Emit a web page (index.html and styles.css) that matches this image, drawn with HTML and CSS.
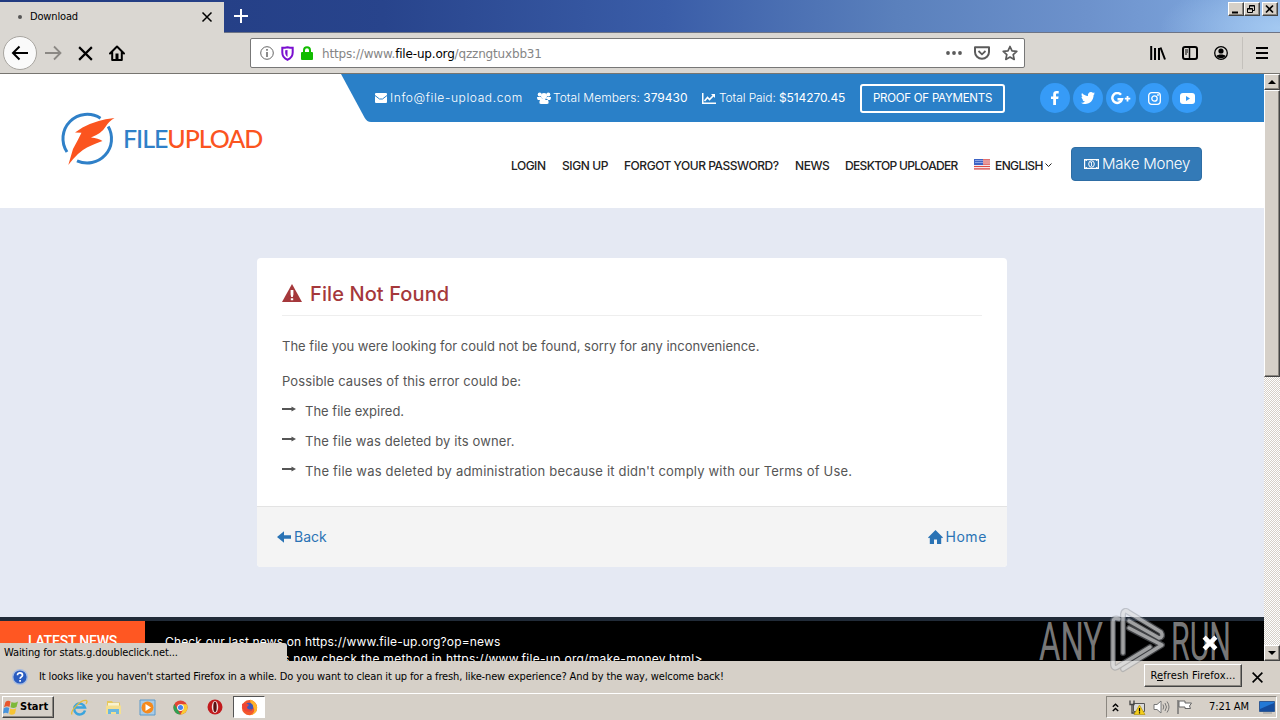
FILE: index.html
```html
<!DOCTYPE html>
<html lang="en">
<head>
<meta charset="utf-8">
<title>Download</title>
<link rel="stylesheet" href="styles.css">
</head>
<body>
<svg class="defs" width="0" height="0">
  <symbol id="x" viewBox="0 0 16 16"><path d="M2 2 14 14M14 2 2 14" fill="none" stroke="currentColor" stroke-width="2"/></symbol>
  <symbol id="arrow" viewBox="0 0 14 8"><path d="M0 4h11" stroke="#555" stroke-width="1.9"/><path d="M9.5 1.500 14 4 9.500 6.500z" fill="#555"/></symbol>
</svg>
<div class="screen">
  <header class="titlebar">
    <div class="tab"><i class="dot"></i><span class="tab-title">Download</span><svg class="tab-close" width="14" height="14"><use href="#x"/></svg></div>
    <svg class="newtab" width="14" height="14" viewBox="0 0 14 14"><path d="M7 0v14M0 7h14" stroke="#fff" stroke-width="2"/></svg>
    <div class="wincontrols">
      <button class="wbtn"><svg width="12" height="11" viewBox="0 0 12 11"><path d="M2 8.500h6" stroke="#000" stroke-width="2"/></svg></button>
      <button class="wbtn"><svg width="12" height="11" viewBox="0 0 12 11"><path d="M3.500 4V1.500h5v5H7M1.500 4.500h5v4h-5zM1.500 5h5M3.500 2h5" fill="none" stroke="#000"/></svg></button>
      <button class="wbtn wclose"><svg width="12" height="11" viewBox="0 0 12 11"><path d="M2 1.500 9 8.500M9 1.500 2 8.500" stroke="#000" stroke-width="1.700"/></svg></button>
    </div>
  </header>

  <div class="toolbar">
    <div class="back"><svg width="18" height="16" viewBox="0 0 18 16"><path d="M17 8H2M8.500 1.500 2 8l6.500 6.500" fill="none" stroke="#000" stroke-width="2"/></svg></div>
    <svg class="fwd" width="17" height="16" viewBox="0 0 17 16"><path d="M0 8h15M9 1.500 15.500 8 9 14.500" fill="none" stroke="#8b8884" stroke-width="1.800"/></svg>
    <svg class="stop" width="17" height="17"><use href="#x"/></svg>
    <svg class="home" width="16" height="16" viewBox="0 0 16 16"><path d="M1 8.500 8 1.500l7 7M3.200 7.500V15h9.600V7.500" fill="none" stroke="#000" stroke-width="2" stroke-linejoin="round" stroke-linecap="round"/><path d="M6.500 8.500h3V15h-3z"/></svg>
    <div class="urlbar">
      <svg width="14" height="14" viewBox="0 0 14 14"><circle cx="7" cy="7" r="6.300" fill="none" stroke="#666"/><path d="M7 3v1.700M7 6v5" stroke="#666" stroke-width="1.500"/></svg>
      <svg width="13" height="15" viewBox="0 0 13 15"><path d="M6.500 1.200c2 .5 3.500.6 5.200.6v4.700c0 3.500-2 6-5.200 7.300C3.300 12.500 1.300 10 1.300 6.500V1.800c1.700 0 3.200-.1 5.200-.6z" fill="none" stroke="#7a0fd0" stroke-width="2"/><path d="M6.500 4v7C4.900 9.700 4.200 8.200 4.200 6.500V4.300z" fill="#7a0fd0"/></svg>
      <svg width="12" height="14" viewBox="0 0 12 14"><path d="M3 7V4.200a3 3 0 0 1 6 0V7" fill="none" stroke="#12bc00" stroke-width="2"/><rect y="6" width="12" height="8" rx="1" fill="#12bc00"/></svg>
      <span class="url">https://www.<b>file-up.org</b>/qzzngtuxbb31</span>
      <span class="urltools">
        <svg width="16" height="4" viewBox="0 0 16 4"><g fill="#5b5b5b"><circle cx="2" cy="2" r="1.900"/><circle cx="8" cy="2" r="1.900"/><circle cx="14" cy="2" r="1.900"/></g></svg>
        <svg width="16" height="14" viewBox="0 0 16 14"><path d="M1 1.200h14V6a7 6.800 0 0 1-14 0z" fill="none" stroke="#5b5b5b" stroke-width="2" stroke-linejoin="round"/><path d="M4.500 5 8 8.300 11.500 5" fill="none" stroke="#5b5b5b" stroke-width="1.800"/></svg>
        <svg width="16" height="16" viewBox="0 0 16 16"><path d="m8 1.500 2 4.400 4.800.5-3.600 3.200 1 4.800L8 12l-4.200 2.400 1-4.800L1.200 6.400 6 5.900z" fill="none" stroke="#5b5b5b" stroke-width="1.700" stroke-linejoin="round"/></svg>
      </span>
    </div>
    <div class="tools">
      <svg width="16" height="14" viewBox="0 0 16 14"><path d="M1.200 0v14M5 2v12M9 2v12M10.500 1.500 15 13.500" stroke="#000" stroke-width="2"/></svg>
      <svg width="16" height="14" viewBox="0 0 16 14"><rect x="1" y="1" width="14" height="12" rx="2" fill="none" stroke="#000" stroke-width="2"/><path d="M7.500 1v12" stroke="#000" stroke-width="1.500"/><path d="M3 4h3M3 6h3M3 8h2" stroke="#000"/></svg>
      <svg width="14" height="14" viewBox="0 0 14 14"><circle cx="7" cy="7" r="6.300" fill="none" stroke="#000" stroke-width="1.300"/><circle cx="7" cy="5" r="2.600"/><path d="M2.500 10c1-2 8-2 9 0-2 3-7 3-9 0z"/></svg>
      <i class="sep"></i>
      <svg width="12" height="12" viewBox="0 0 12 12"><path d="M0 1h12M0 6h12M0 11h12" stroke="#000" stroke-width="2"/></svg>
    </div>
  </div>

  <div class="viewport">
    <main class="page">
      <div class="site-head">
        <div class="logo">
          <svg width="56" height="56" viewBox="0 0 56 56"><path d="M40.500 8.200A24.300 24.300 0 0 0 7 42M48.200 16.500A24.300 24.300 0 0 1 17 50.800" fill="none" stroke="#2f80c8" stroke-width="3"/><path d="M54.500 8Q36 10 22.500 17.500L15 22.500l6.500.3Q18 30 13 39L8.300 55Q18 42 27 37.500T42.500 31q-4-2.800-11.500-3.500Q42 23 45 17.500 49 11 54.500 8z" fill="#fb541f"/></svg>
          <span class="logo-text">FILE<em>UPLOAD</em></span>
        </div>
        <div class="head-right">
          <div class="topbar">
            <svg class="slant" width="30" height="48" viewBox="0 0 30 48"><path d="M0 0h30v48Q26 48 23.500 43.500z" fill="#2a80c8"/></svg>
            <div class="topbar-in">
              <span class="info mail"><svg width="12" height="10" viewBox="0 0 12 10"><rect width="12" height="10" rx="1" fill="#fff"/><path d="M0 2.500 4.500 6h3L12 2.500" fill="none" stroke="#2a80c8"/></svg><span>Info@file-upload.com</span></span>
              <span class="info members"><svg width="14" height="12" viewBox="0 0 14 12" fill="#fff"><circle cx="2.700" cy="2.500" r="2"/><circle cx="11.300" cy="2.500" r="2"/><circle cx="7" cy="4" r="3"/><path d="M0 5h4l2 3H1Q0 8 0 5zM14 5h-4L8 8h5q1 0 1-3zM2.500 9.500Q3 6 7 6.500 11 6 11.500 9.500 12 12 10 12H4Q2 12 2.500 9.500z"/></svg><span>Total Members: <b>379430</b></span></span>
              <span class="info paid"><svg width="14" height="11" viewBox="0 0 14 11"><path d="M.7 0v10.300H14M2.500 8l3-3.500 2 2L12 2" fill="none" stroke="#fff" stroke-width="1.600"/><path d="M9 1h4v4z" fill="#fff"/></svg><span>Total Paid: <b>$514270.45</b></span></span>
              <span class="proof">PROOF OF PAYMENTS</span>
              <div class="social">
                <i><svg width="8" height="14" viewBox="0 0 8 14"><path d="M2.200 14V8H0V5.400h2.200V3.300C2.200 1 3.500 0 5.400 0H7.700v2.500H6.300C5.200 2.500 5 3 5 3.700v1.700h2.600L7.200 8H5v6z" fill="#fff"/></svg></i>
                <i><svg width="14" height="12" viewBox="0 0 14 12"><path d="M14 1.500 12.600 3C12.700 8 9 12 4.300 12 2.500 12 1 11.500 0 10.700c1.500.1 3-.3 4-1.200-1.300 0-2.200-.8-2.600-2h1.200C1.200 7.100.5 6 .5 4.700l1.200.3C.5 4 .2 2.300 1 1c1.500 1.800 3.500 2.800 6 3C6.500 1.800 8 0 10 0c.8 0 1.500.3 2 .9L13.600.3 12.700 1.700z" fill="#fff"/></svg></i>
                <i><svg width="20" height="13" viewBox="0 0 20 13"><path d="M10 2.800A4.900 4.900 0 1 0 11 7.200H6.500" fill="none" stroke="#fff" stroke-width="2.500"/><path d="M16.500 4v5.500M13.800 6.700h5.500" stroke="#fff" stroke-width="1.800"/></svg></i>
                <i><svg width="13" height="13" viewBox="0 0 13 13"><rect x=".7" y=".7" width="11.600" height="11.600" rx="3" fill="none" stroke="#fff" stroke-width="1.300"/><circle cx="6.500" cy="6.500" r="2.700" fill="none" stroke="#fff" stroke-width="1.300"/><circle cx="10" cy="3" r=".9" fill="#fff"/></svg></i>
                <i><svg width="15" height="11" viewBox="0 0 15 11"><rect width="15" height="11" rx="3" fill="#fff"/><path d="m6 3 4 2.500L6 8z" fill="#369bf7"/></svg></i>
              </div>
            </div>
          </div>
          <nav class="nav">
            <span class="n1">LOGIN</span><span class="n2">SIGN UP</span><span class="n3">FORGOT YOUR PASSWORD?</span><span class="n4">NEWS</span><span class="n5">DESKTOP UPLOADER</span>
            <span class="lang"><svg width="16" height="11" viewBox="0 0 16 11"><path fill="#f3e9ea" d="M0 0h16v11H0z"/><path d="M0 .8h16M0 3h16M0 5.200h16M0 7.500h16M0 9.900h16" stroke="#dd4b48" stroke-width="1.200"/><path fill="#3e64c5" d="M0 0h9v6H0z"/><path d="M1.500 1.500h7M1.500 3.500h7" stroke="#d7e2ff" stroke-dasharray="1 1"/></svg><span class="n6">ENGLISH</span><svg width="7" height="5" viewBox="0 0 7 5"><path d="M.5.500 3.500 3.500 6.500.500" fill="none" stroke="#222"/></svg></span>
            <span class="money"><svg width="15" height="10" viewBox="0 0 15 10"><rect x=".6" y=".6" width="13.800" height="8.800" fill="none" stroke="#fff" stroke-width="1.200"/><ellipse cx="7.500" cy="5" rx="2.800" ry="3.200" fill="none" stroke="#fff"/><path d="M7.500 3v4M6.500 3.500h1M1.500 1.500h1.500M1.500 8.500H3M13.500 1.500H12M13.500 8.500H12" stroke="#fff" stroke-width=".9"/></svg><span>Make Money</span></span>
          </nav>
        </div>
      </div>

      <section class="card">
        <div class="card-body">
          <h1><svg width="20" height="18" viewBox="0 0 20 18"><path d="M10 0 20 18H0z" fill="#a5383b"/><path d="M8.600 6h2.800v4.500L10.800 13H9.200l-.6-2.500zM8.800 14.300h2.400v2H8.800z" fill="#fff"/></svg><span>File Not Found</span></h1>
          <p class="p1">The file you were looking for could not be found, sorry for any inconvenience.</p>
          <p class="p2">Possible causes of this error could be:</p>
          <ul>
            <li><svg width="14" height="8"><use href="#arrow"/></svg><span class="l1">The file expired.</span></li>
            <li><svg width="14" height="8"><use href="#arrow"/></svg><span class="l2">The file was deleted by its owner.</span></li>
            <li><svg width="14" height="8"><use href="#arrow"/></svg><span class="l3">The file was deleted by administration because it didn't comply with our Terms of Use.</span></li>
          </ul>
        </div>
        <div class="card-foot">
          <span class="link"><svg width="14" height="12" viewBox="0 0 14 12"><path d="M0 6 7 .3v4h7v3.400H7v4z" fill="#2a73b5"/></svg><span>Back</span></span>
          <span class="link home-link"><svg width="15" height="14" viewBox="0 0 15 14"><path d="M7.500 0 15 7.500l-1 .8-.8-.5V14H9V9.500H6V14H1.800V7.800l-.8.5-1-.8z" fill="#2a73b5"/></svg><span class="hm">Home</span></span>
        </div>
      </section>

      <section class="news">
        <div class="news-label">LATEST NEWS</div>
        <div class="news-text"><p class="t1">Check our last news on https://www.file-up.org?op=news</p><p class="t2">New payments news now check the method in https://www.file-up.org/make-money.html&gt;</p></div>
      </section>
    </main>
    <aside class="scroll">
      <div class="sbtn"><svg width="8" height="4" viewBox="0 0 8 4"><path d="M0 4 4 0l4 4z"/></svg></div>
      <div class="thumb"></div>
      <div class="sbtn bottom"><svg width="8" height="4" viewBox="0 0 8 4"><path d="M0 0 4 4l4-4z"/></svg></div>
    </aside>
    <div class="status">Waiting for stats.g.doubleclick.net...</div>
  </div>

  <div class="notice">
    <svg width="16" height="16" viewBox="0 0 16 16"><circle cx="8" cy="8" r="7.300" fill="#2a5cc0" stroke="#a9bde0" stroke-width="1.400"/><path d="M5.500 6.200c0-3.200 5-3 5 0 0 1.600-2.400 1.700-2.400 3.600M8.100 11v1.800" fill="none" stroke="#fff" stroke-width="1.700"/></svg>
    <span class="notice-text">It looks like you haven't started Firefox in a while. Do you want to clean it up for a fresh, like-new experience? And by the way, welcome back!</span>
    <button class="refresh"><span>R<u>e</u>fresh Firefox...</span></button>
    <svg class="nclose" width="13" height="13"><use href="#x"/></svg>
  </div>

  <footer class="taskbar">
    <button class="start"><svg width="16" height="15" viewBox="0 0 16 15"><path d="M2.500 2C4 .5 6 .5 7.500 1.500L6.500 7C5 6 3 6 1 7.200z" fill="#e9562c"/><path d="M8.500 2c2 1 4 1 6.500-.5l-1.500 5.500c-2 1.400-4 1.400-6 .3z" fill="#7db93a"/><path d="M.8 8.200C2.800 7 4.500 7 6.200 8l-1 5.500C3.500 12.500 2 12.500 0 13.500z" fill="#4793dc"/><path d="M7.200 8.400c2 1.200 4 1 6-.1L12 13.500c-2 1.500-4 1.500-5.800.5z" fill="#f6c434"/></svg><span>Start</span></button>
    <div class="apps">
      <svg width="17" height="17" viewBox="0 0 17 17"><path d="M14 11.500A5.500 5.500 0 1 1 14 8.500H4" fill="none" stroke="#3ba4dd" stroke-width="2.500"/><path d="M1 15.500C-1 12 10 0 15.500 1.500c1 .7.500 2-.5 3.500" fill="none" stroke="#e5bc3c" stroke-width="1.300"/></svg>
      <svg width="17" height="17" viewBox="0 0 17 17"><path d="M2 2h5l1 1.500h7V12H2z" fill="#e6c85e"/><path d="M3 4h11v3H3z" fill="#f9f3cf"/><path d="M1 6.500h15V15H1z" fill="#f4df91"/><path d="M3 15v-5h11v5h-3v-2H6v2z" fill="#6cb8df"/></svg>
      <svg width="17" height="17" viewBox="0 0 17 17"><path d="M1 1h15v15H1z" fill="#a9cbe6" stroke="#5d9bcb"/><circle cx="8.500" cy="8.500" r="6" fill="#f58a1d"/><path d="m6.500 5 5.500 3.500L6.500 12z" fill="#fff"/></svg>
      <svg width="15" height="15" viewBox="0 0 16 16"><circle cx="8" cy="8" r="7.500" fill="#e24435"/><path d="M1.500 4.200 8 15.500A7.500 7.500 0 0 1 1.500 4.200z" fill="#2fa052"/><path d="M8 15.500 12 8 8 4.500h6.600A7.500 7.500 0 0 1 8 15.500z" fill="#f9cd35"/><circle cx="8" cy="8" r="3.600" fill="#fff"/><circle cx="8" cy="8" r="2.700" fill="#4384ee"/></svg>
      <svg class="opera" width="16" height="16" viewBox="0 0 16 16"><circle cx="8" cy="8" r="7.500" fill="#c21a1d"/><ellipse cx="8" cy="8" rx="3.200" ry="6" fill="#f2dedd"/><ellipse cx="8" cy="8" rx="1.700" ry="5.200" fill="#5a1012"/></svg>
      <div class="active-app"><svg width="17" height="17" viewBox="0 0 17 17"><circle cx="8.500" cy="8.700" r="7.600" fill="#f4582c"/><path d="M9 .5c3 1 7 3.500 7.200 8A7.600 7.600 0 0 1 9 16.300c6-3 5-8 1-10z" fill="#ffb42a"/><circle cx="8" cy="8" r="4.200" fill="#4256b8"/><path d="M1 5c1-1 2.500-1 4-.5 1 .3 2 .5 3 1.500L6 8c0 2 2 3 5 2-1 3-6 3.500-8 1C1.500 9.500 1 7 1 5z" fill="#ee4434"/></svg></div>
    </div>
    <div class="tray">
      <svg class="chev" width="7" height="9" viewBox="0 0 7 9"><path d="m.8 3.800 2.700-2.500 2.700 2.500M.8 8l2.700-2.500L6.200 8" fill="none" stroke="#000" stroke-width="1.400"/></svg>
      <svg class="net" width="17" height="15" viewBox="0 0 17 15"><path d="M4.500 3.500h11v8h-11z" fill="#dadada" stroke="#555"/><path d="M1 .5v4h4v-4M3 4.500V13h3" fill="none" stroke="#444" stroke-width="1.300"/><path d="M10.500 5 16 14.500H5z" fill="#f5ce1b" stroke="#a98900" stroke-width=".6"/><path d="M10.500 8v3.500M10.500 12.300v1.300" stroke="#000" stroke-width="1.200"/></svg>
      <svg class="vol" width="17" height="14" viewBox="0 0 17 14"><path d="M1 4.500h3L8 1v12L4 9.500H1z" fill="#fff" stroke="#777"/><path d="M10 4.500q1.500 2.500 0 5M12 3q3 4 0 8M14 1.500q4 5.500 0 11" fill="none" stroke="#777"/></svg>
      <svg class="flag" width="16" height="14" viewBox="0 0 16 14"><path d="M1 0v14" stroke="#666" stroke-width="1.300"/><path d="M2 1h6v2h6.500l-2 3 1 2.500H8V7H2z" fill="#fff" stroke="#666"/></svg>
      <span class="clock">7:21 AM</span>
      <svg class="desk" width="17" height="13" viewBox="0 0 17 13"><path d="M.5.500h15v10H.5z" fill="#2379d6" stroke="#315a94"/><path d="m1 8 14-6v8H1z" fill="#154c9d"/><path d="M4 12h9" stroke="#999"/></svg>
    </div>
  </footer>

  <svg class="watermark" width="196" height="68" viewBox="0 0 196 68">
    <g fill="#fff" fill-opacity=".48">
      <text x="1" y="52" textLength="64" lengthAdjust="spacingAndGlyphs">ANY</text>
      <text x="133" y="52" textLength="60" lengthAdjust="spacingAndGlyphs">RUN</text>
    </g>
    <g fill="none" stroke-linejoin="round" stroke-linecap="round">
      <path id="wm" d="M81 11Q75 9 75 14V57Q76 62 81 58L112 39M85 45V6Q86 1 90 4L123 24Q126 29 121 30L91 13M91 20 124 37 85 61" stroke="#8f9299" stroke-opacity=".45" stroke-width="6"/>
      <path d="M81 11Q75 9 75 14V57Q76 62 81 58L112 39M85 45V6Q86 1 90 4L123 24Q126 29 121 30L91 13M91 20 124 37 85 61" stroke="#fff" stroke-opacity=".5" stroke-width="3.500"/>
    </g>
  </svg>
  <svg class="news-close" width="16" height="16" viewBox="0 0 15 15"><path d="M2 2 13 13M13 2 2 13" stroke="#fff" stroke-width="4.200"/></svg>
</div>
</body>
</html>
```
FILE: styles.css
```css
* { box-sizing: border-box; }
body { margin: 0; overflow: hidden; }
p, h1, ul { margin: 0; padding: 0; }
svg { display: block; flex: none; }
button { padding: 0; border: 0; border-radius: 0; font: inherit; color: #000; }
.defs { position: absolute; }
.screen { position: relative; width: 1280px; height: 720px; display: flex; flex-direction: column; overflow: hidden; font: 11px/14px "DejaVu Sans Condensed", "DejaVu Sans", sans-serif; font-stretch: condensed; color: #000; white-space: nowrap; }

.titlebar { height: 33px; display: flex; border-bottom: 1px solid #6d7486; background: radial-gradient(ellipse 120px 50px at 1280px 28px, #a4c9f1, transparent), linear-gradient(90deg, #213a80 0, #28448c 30%, #3a5da8 52%, #5a80bc 70%, #6d92cc 85%, #83ace2 100%); }
.tab { width: 224px; height: 33px; margin-top: 2px; padding: 0 11px 3px 18px; display: flex; align-items: center; background: #dad7d2; }
.dot { width: 4px; height: 4px; border-radius: 50%; background: #555; }
.tab-title { margin-left: 8px; letter-spacing: -.15px; }
.tab-close { margin-left: auto; width: 12px; height: 12px; }
.newtab { margin: 9px 0 0 10px; }
.wincontrols { margin: 2px 2px 0 auto; display: flex; }
.wbtn, .sbtn, .refresh, .start { background: #d6d0c8; border: 1px solid; border-color: #fff #444 #444 #fff; box-shadow: inset -1px -1px #8b8780; }
.wbtn { width: 16px; height: 14px; display: flex; justify-content: center; align-items: center; }
.wclose { margin-left: 2px; }

.toolbar { height: 41px; display: flex; align-items: center; background: #dad7d2; border-bottom: 1px solid #777570; }
.back { width: 34px; height: 34px; margin-left: 3px; border: 1px solid #a8a5a0; border-radius: 50%; background: #fafafa; display: flex; align-items: center; justify-content: center; flex: none; }
.fwd { margin-left: 8px; }
.stop { margin-left: 15px; }
.home { margin-left: 15px; }
.urlbar { width: 775px; height: 30px; margin-left: 125px; padding: 0 6px 0 9px; display: flex; align-items: center; gap: 7px; background: #fff; border: 1px solid #777; border-radius: 2px; flex: none; }
.url { margin: 2px 0 0 2px; font: 12px "DejaVu Sans", sans-serif; letter-spacing: -.17px; color: #858585; }
.url b { font-weight: 400; color: #000; }
.urltools { margin-left: auto; display: flex; align-items: center; gap: 12px; }
.tools { display: flex; align-items: center; margin-left: 125px; gap: 16px; }
.sep { width: 1px; height: 32px; background: #c4c1bc; margin: 0 -4px 0 -2px; }
.tools svg:last-child { margin-left: 1px; }

.viewport { position: relative; height: 587px; display: flex; overflow: hidden; }
.page { width: 1264px; height: 587px; background: #e5e9f3; font-family: Inter, "Open Sans", sans-serif; }
.site-head { height: 134px; background: #fff; display: flex; }
.logo { width: 341px; padding: 36px 0 0 60px; display: flex; flex: none; }
.logo-text { margin: 13px 0 0 7px; font: 500 25px/30px Lato, sans-serif; letter-spacing: -1.05px; color: #2f80c8; }
.logo-text em { font-style: normal; color: #fb541f; }
.head-right { width: 923px; }
.topbar { display: flex; height: 48px; color: #fff; font-size: 12px; }
.topbar-in { flex: 1; display: flex; align-items: center; background: #2a80c8; padding-left: 4px; }
.info { display: flex; align-items: center; gap: 3px; font-weight: 300; flex: none; }
.info b { font-weight: 400; }
.mail { width: 162px; letter-spacing: .6px; }
.members { width: 165px; gap: 2px; letter-spacing: .02px; }
.paid { width: 158px; gap: 3px; letter-spacing: -.1px; }
.proof { width: 145px; height: 29px; border: 2px solid #fff; border-radius: 3px; display: flex; align-items: center; justify-content: center; font-weight: 400; font-size: 11.5px; letter-spacing: -.25px; }
.social { display: flex; gap: 3.1px; margin-left: 35px; }
.social i { width: 30px; height: 30px; border-radius: 50%; background: #369bf7; display: flex; align-items: center; justify-content: center; }
.nav { display: flex; align-items: center; height: 34px; margin: 25px 0 0 170px; font-size: 12px; font-weight: 500; color: #222; }
.nav > span { flex: none; }
.n1 { width: 51px; letter-spacing: -.5px; }
.n2 { width: 62px; letter-spacing: -.4px; }
.n3 { width: 171px; letter-spacing: -.47px; }
.n4 { width: 50px; letter-spacing: -.4px; }
.n5 { width: 129px; letter-spacing: -.67px; }
.n1, .n2, .n3, .n4, .n5, .n6 { padding-top: 3px; }
.lang { width: 97px; display: flex; align-items: center; }
.lang .n6 { width: 50px; margin-left: 5px; letter-spacing: -.6px; }
.lang svg:last-child { margin-top: 3px; }
.nav .money { width: 131px; height: 34px; display: flex; align-items: center; padding-left: 12px; gap: 3px; border: 1px solid #2e6da4; border-radius: 4px; background: #337ab7; color: #fff; font-size: 15px; font-weight: 300; letter-spacing: -.2px; }

.card { width: 750px; height: 309px; margin: 50px 0 0 257px; border-radius: 4px; background: #fff; overflow: hidden; color: #555; font-size: 13px; }
.card-body { height: 248px; padding: 15px 25px 0; }
.card h1 { display: flex; align-items: center; gap: 8px; height: 43px; border-bottom: 1px solid #eee; font-size: 20px; font-weight: 500; color: #a5383b; }
.card h1 svg { margin-top: -2px; }
.card h1 span { letter-spacing: .1px; }
.p1 { margin-top: 20px; line-height: 20px; }
.p2 { margin-top: 15px; line-height: 20px; letter-spacing: .1px; }
.card ul { margin-top: 5px; }
.card li { display: flex; align-items: center; height: 30px; gap: 9px; }
.card li svg { margin-top: -4px; }
.l2 { letter-spacing: .12px; }
.l3 { letter-spacing: .19px; }
.card-foot { height: 61px; padding: 0 20px; display: flex; align-items: center; justify-content: space-between; background: #f4f4f4; border-top: 1px solid #e3e3e3; font-size: 14px; color: #2a73b5; }
.link { display: flex; align-items: center; gap: 3px; }
.home-link { gap: 2px; letter-spacing: .6px; }

.news { height: 44px; margin-top: 50px; border-top: 4px solid #212b38; background: #000; color: #fff; display: flex; font-size: 12px; overflow: hidden; }
.news-label { width: 145px; background: #ff5722; text-align: center; font: 500 14px/40px Roboto, sans-serif; letter-spacing: -.2px; }
.news-text { padding: 12px 0 0 20px; line-height: 17px; letter-spacing: .16px; }
.t2 { padding-left: 2px; letter-spacing: .27px; }

.scroll { width: 16px; display: flex; flex-direction: column; background: repeating-conic-gradient(#d6d0c8 0 25%, #fff 0 50%) 0 0 / 2px 2px; }
.sbtn { height: 16px; display: flex; align-items: center; justify-content: center; flex: none; }
.thumb { height: 287px; background: #d6d0c8; border: 1px solid; border-color: #fff #444 #444 #fff; box-shadow: inset -1px -1px #8b8780; }
.bottom { margin-top: auto; }
.status { position: absolute; left: 0; bottom: 0; width: 287px; height: 18px; padding: 3px 4px 0; background: #d6d0c8; border-radius: 0 3px 0 0; letter-spacing: -.12px; }

.notice { height: 32px; display: flex; align-items: center; background: #d6d0c8; padding: 0 16px 0 12px; }
.notice-text { width: 1094px; margin-left: 11px; letter-spacing: -.14px; }
.refresh { width: 98px; height: 23px; margin: -3px 0 0 12px; letter-spacing: .15px; }
.nclose { margin-left: 9px; }
.taskbar { height: 27px; display: flex; align-items: center; border-top: 1px solid #fff; background: #d6d0c8; }
.start { width: 52px; height: 22px; margin-left: 2px; display: flex; align-items: center; gap: 1px; padding-left: 0; font-weight: 700; }
.apps { display: flex; align-items: center; margin-left: 17px; gap: 17px; }
.opera { margin-left: 2px; }
.active-app { width: 32px; height: 22px; margin-left: -7px; border: 1px solid; border-color: #555 #fff #fff #555; background: #fff; display: flex; align-items: center; justify-content: center; }
.tray { width: 171px; height: 22px; margin: 0 3px 0 auto; display: flex; align-items: center; border: 1px solid; border-color: #8b8780 #fff #fff #8b8780; padding-left: 5px; }
.net { margin-left: 10px; }
.vol { margin-left: 7px; }
.flag { margin-left: 7px; }
.clock { width: 51px; margin-left: 16px; letter-spacing: -.1px; }

.watermark { position: absolute; left: 1038px; top: 608px; }
.watermark text { font: 53px Roboto, sans-serif; }
.news-close { position: absolute; left: 1202px; top: 635px; }
```
